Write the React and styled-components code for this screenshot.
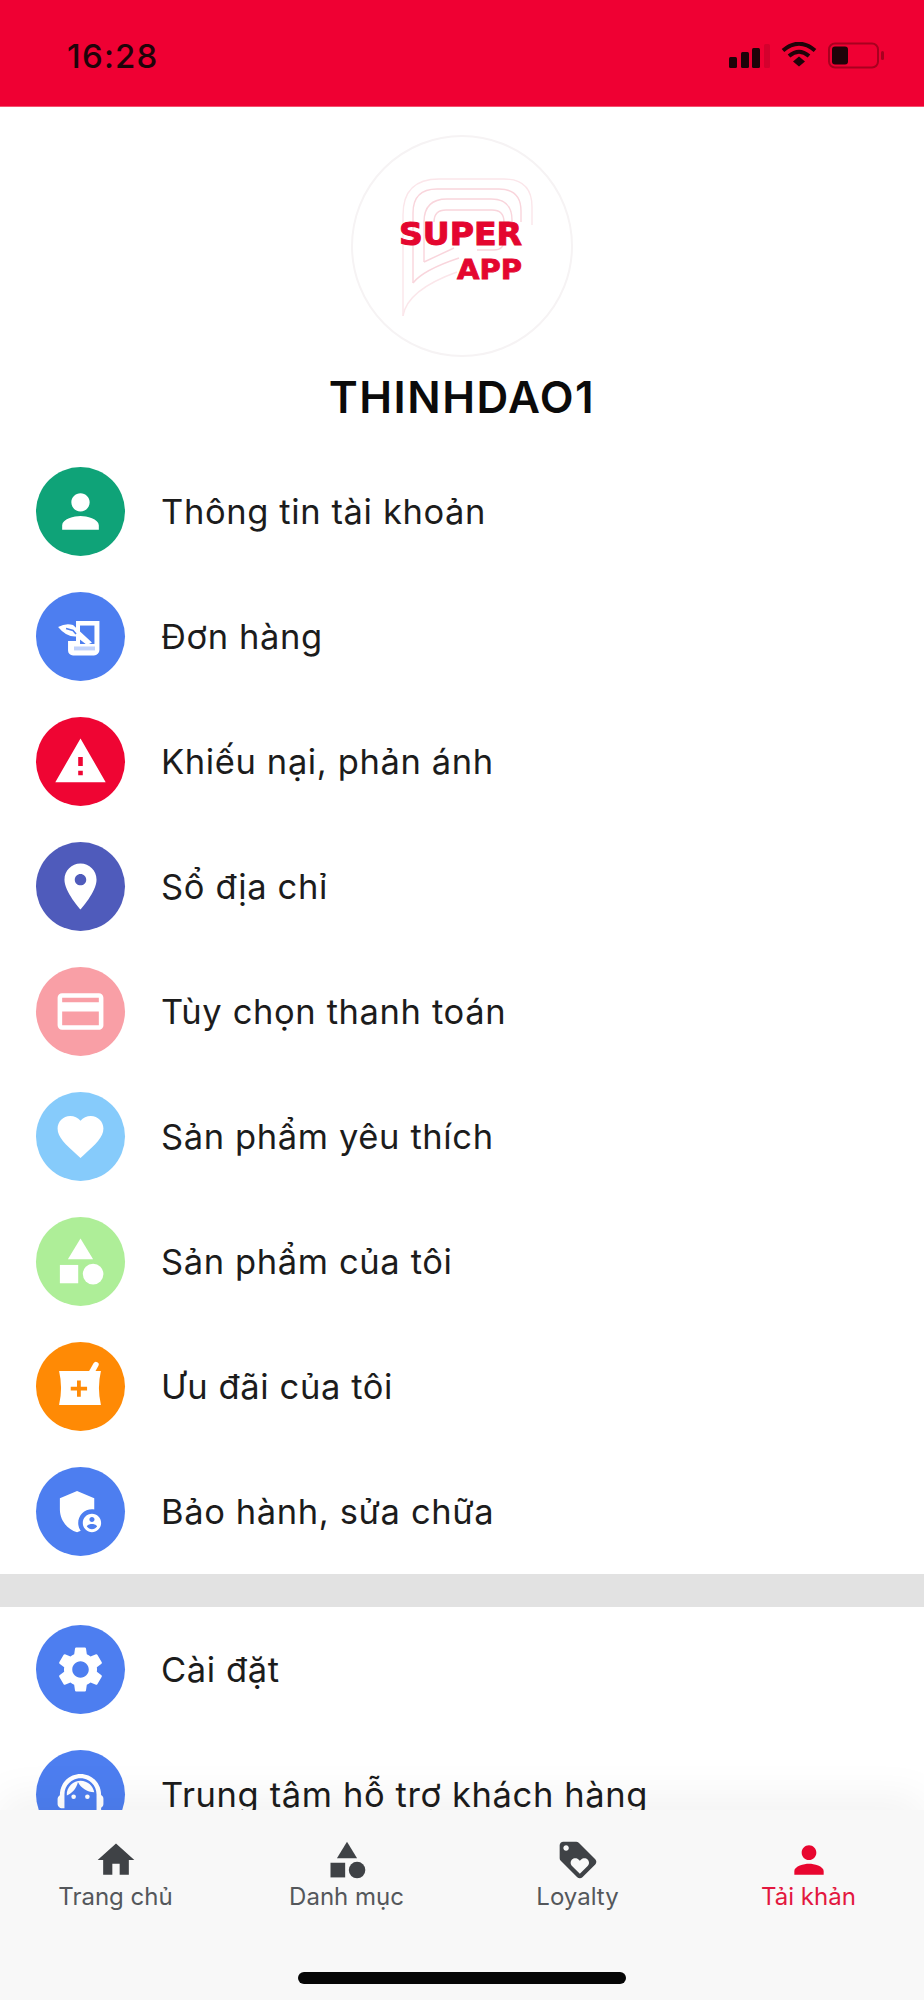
import React from 'react';
import styled, { createGlobalStyle } from 'styled-components';

const GlobalStyle = createGlobalStyle`
  html, body {
    margin: 0;
    padding: 0;
    background: #fff;
  }
  body {
    font-family: "Inter", "Noto Sans", "Liberation Sans", sans-serif;
  }
`;

const Page = styled.div`
  width: 924px;
  height: 2000px;
  display: flex;
  flex-direction: column;
  overflow: hidden;
  background: #fff;
`;

const StatusBar = styled.header`
  flex: 0 0 107px;
  box-sizing: border-box;
  display: flex;
  align-items: center;
  justify-content: space-between;
  padding: 6px 38px 0 67px;
  background: #ef0033;
  border-bottom: 1px solid #f4526f;
`;

const Clock = styled.span`
  font-size: 33px;
  font-weight: 500;
  letter-spacing: 1.2px;
  line-height: 1;
  color: #1f0309;
`;

const StatusIcons = styled.svg`
  display: block;
`;

const Content = styled.main`
  flex: 1;
  min-height: 0;
  overflow: hidden;
`;

const Profile = styled.section`
  display: flex;
  flex-direction: column;
  align-items: center;
  padding-top: 28px;
`;

const Avatar = styled.div`
  width: 222px;
  height: 222px;
  box-sizing: border-box;
  border: 2px solid #f6f3f4;
  border-radius: 50%;
`;

const LogoDrawing = styled.svg`
  display: block;
  margin: -2px;
`;

const UserName = styled.h1`
  margin: 15px 0 0;
  font-size: 44px;
  line-height: 50px;
  font-weight: 600;
  letter-spacing: 1.5px;
  color: #0b0b0b;
`;

const Menu = styled.nav`
  display: flex;
  flex-direction: column;
  gap: 36px;
  padding: ${(p) => (p.$first ? '45px 0 18px 36px' : '18px 0 0 36px')};
`;

const Row = styled.div`
  display: flex;
  align-items: center;
  gap: 36px;
`;

const Badge = styled.span`
  flex: 0 0 89px;
  height: 89px;
  display: flex;
  align-items: center;
  justify-content: center;
  border-radius: 50%;
  background: ${(p) => p.$bg};
  color: ${(p) => p.$bg};
`;

const Glyph = styled.svg`
  width: 55px;
  height: 55px;
  display: block;
  fill: #fff;
`;

const RowLabel = styled.span`
  font-size: 34.5px;
  line-height: 44px;
  letter-spacing: 0.62px;
  color: #1c1c1c;
  white-space: nowrap;
`;

const Divider = styled.div`
  height: 33px;
  background: #e2e2e2;
`;

const TabBar = styled.footer`
  flex: 0 0 190px;
  position: relative;
  display: flex;
  flex-direction: column;
  align-items: center;
  background: #f8f8f8;
  box-shadow: 0 -14px 40px rgba(0, 0, 0, 0.05);
`;

const Tabs = styled.div`
  width: 924px;
  display: grid;
  grid-template-columns: repeat(4, 231px);
  padding-top: 28px;
`;

const Tab = styled.div`
  display: flex;
  flex-direction: column;
  align-items: center;
  color: ${(p) => (p.$active ? '#e3173f' : '#54575b')};
`;

const TabIcon = styled.svg`
  width: 44px;
  height: 44px;
  display: block;
  fill: ${(p) => (p.$active ? '#e8062f' : '#3f4246')};
`;

const TabLabel = styled.span`
  font-size: 24px;
  line-height: 30px;
  white-space: nowrap;
`;

const HomeIndicator = styled.div`
  width: 328px;
  height: 12px;
  margin-top: 60px;
  border-radius: 6px;
  background: #050505;
`;

const LOCAL_BOX = '16.9 16.9 55.2 55.2';
const MATERIAL_BOX = '0 0 24 24';

const paths = {
  person: 'M12 12c2.21 0 4-1.79 4-4s-1.79-4-4-4-4 1.79-4 4 1.79 4 4 4zm0 2c-2.67 0-8 1.34-8 4v2h16v-2c0-2.66-5.33-4-8-4z',
  warning: 'M1 21h22L12 2 1 21zm12-3h-2v-2h2v2zm0-4h-2v-4h2v4z',
  room: 'M12 2C8.13 2 5 5.13 5 9c0 5.25 7 13 7 13s7-7.75 7-13c0-3.87-3.13-7-7-7zm0 9.5c-1.38 0-2.5-1.12-2.5-2.5s1.12-2.5 2.5-2.5 2.5 1.12 2.5 2.5-1.12 2.5-2.5 2.5z',
  card: 'M20 4H4c-1.11 0-1.99.89-1.99 2L2 18c0 1.11.89 2 2 2h16c1.11 0 2-.89 2-2V6c0-1.11-.89-2-2-2zm0 14H4v-6h16v6zm0-10H4V6h16v2z',
  heart: 'M12 21.35l-1.45-1.32C5.4 15.36 2 12.28 2 8.5 2 5.42 4.42 3 7.5 3c1.74 0 3.41.81 4.5 2.09C13.09 3.81 14.76 3 16.5 3 19.58 3 22 5.42 22 8.5c0 3.78-3.4 6.86-8.55 11.54L12 21.35z',
  shield: 'M17 11c.34 0 .67.04 1 .09V6.27L10.5 3 3 6.27v4.91c0 4.54 3.2 8.79 7.5 9.82.55-.13 1.08-.32 1.6-.55-.69-.98-1.1-2.17-1.1-3.45 0-3.31 2.69-6 6-6z',
  shieldUser: 'M17 13c-2.21 0-4 1.79-4 4s1.79 4 4 4 4-1.79 4-4-1.79-4-4-4zm0 1.38c.62 0 1.12.51 1.12 1.12s-.51 1.12-1.12 1.12-1.12-.51-1.12-1.12.5-1.12 1.12-1.12zm0 5.37c-.93 0-1.74-.46-2.24-1.17.05-.72 1.51-1.08 2.24-1.08s2.19.36 2.24 1.08c-.5.71-1.31 1.17-2.24 1.17z',
  gear: 'M19.14 12.94c.04-.3.06-.61.06-.94 0-.32-.02-.64-.07-.94l2.03-1.58c.18-.14.23-.41.12-.61l-1.92-3.32c-.12-.22-.37-.29-.59-.22l-2.39.96c-.5-.38-1.03-.7-1.62-.94l-.36-2.54c-.04-.24-.24-.41-.48-.41h-3.84c-.24 0-.43.17-.47.41l-.36 2.54c-.59.24-1.13.57-1.62.94l-2.39-.96c-.22-.08-.47 0-.59.22L2.74 8.87c-.12.21-.08.47.12.61l2.03 1.58c-.05.3-.09.63-.09.94s.02.64.07.94l-2.03 1.58c-.18.14-.23.41-.12.61l1.92 3.32c.12.22.37.29.59.22l2.39-.96c.5.38 1.03.7 1.62.94l.36 2.54c.05.24.24.41.48.41h3.84c.24 0 .44-.17.47-.41l.36-2.54c.59-.24 1.13-.56 1.62-.94l2.39.96c.22.08.47 0 .59-.22l1.92-3.32c.12-.22.07-.47-.12-.61l-2.01-1.58zM12 15.6c-1.98 0-3.6-1.62-3.6-3.6s1.62-3.6 3.6-3.6 3.6 1.62 3.6 3.6-1.62 3.6-3.6 3.6z',
  home: 'M10 20v-6h4v6h5v-8h3L12 3 2 12h3v8z',
  loyalty: 'M21.41 11.58l-9-9C12.05 2.22 11.55 2 11 2H4c-1.1 0-2 .9-2 2v7c0 .55.22 1.05.59 1.42l9 9c.36.36.86.58 1.41.58.55 0 1.05-.22 1.41-.59l7-7c.37-.36.59-.86.59-1.41 0-.55-.23-1.06-.59-1.42zM5.5 7C4.67 7 4 6.33 4 5.5S4.67 4 5.5 4 7 4.67 7 5.5 6.33 7 5.5 7zm11.77 8.27L13 19.54l-4.27-4.27C8.28 14.81 8 14.19 8 13.5c0-1.38 1.12-2.5 2.5-2.5.69 0 1.32.28 1.77.74l.73.72.73-.73c.45-.45 1.08-.73 1.77-.73 1.38 0 2.5 1.12 2.5 2.5 0 .69-.28 1.32-.73 1.77z',
};

const Shapes = () => (
  <>
    <path d="M12 2l-5.5 9h11z" />
    <circle cx="17.5" cy="17.5" r="4.5" />
    <path d="M3 13.5h8v8H3z" />
  </>
);

const OrderGlyph = () => (
  <Glyph viewBox={LOCAL_BOX}>
    <path d="M40 29H63.5V58a5.5 5.5 0 0 1-5.5 5.5H37a5 5 0 0 1-5-5V49h8z" />
    <path d="M44 33.500H58.500V52H44z" fill="currentColor" />
    <path d="M38 54.500H59V58.500H38z" fill="currentColor" opacity="0.35" />
    <path d="M22 35Q30 30.500 37 33L56 50.500 51 53 40 44.500Q30 45 22 35Z" />
    <path d="M30 36.500L37 38.500 40 42" fill="none" stroke="currentColor" strokeWidth="1.600" />
  </Glyph>
);

const MortarGlyph = () => (
  <Glyph viewBox={LOCAL_BOX}>
    <path d="M60 22.500L54 33" fill="none" stroke="#fff" strokeWidth="5.500" strokeLinecap="round" />
    <path
      fillRule="evenodd"
      d="M23 29H65Q61 46 65 63H23Q27 46 23 29ZM41 38.500V44.800H34.700V48.600H41V54.900H44.800V48.600H51.100V44.800H44.800V38.500Z"
    />
  </Glyph>
);

const HeadsetGlyph = () => (
  <Glyph viewBox={MATERIAL_BOX}>
    <path d="M21 12.22C21 6.73 16.74 3 12 3c-4.69 0-9 3.650-9 9.280-.6.34-1 .98-1 1.720v2c0 1.100.9 2 2 2h1v-6.100c0-3.870 3.130-7 7-7s7 3.130 7 7V19h-8v2h8c1.100 0 2-.9 2-2v-1.220c.59-.31 1-.92 1-1.640v-2.300c0-.7-.41-1.310-1-1.620z" />
    <circle cx="9" cy="13" r="1" />
    <circle cx="15" cy="13" r="1" />
    <path d="M18 11.030C17.520 8.180 15.040 6 12.050 6c-3.030 0-6.290 2.510-6.030 6.450 2.470-1.010 4.330-3.210 4.860-5.890 1.310 2.630 4 4.440 7.120 4.470z" />
  </Glyph>
);

const materialGlyph = (...ds) => () => (
  <Glyph viewBox={MATERIAL_BOX}>
    {ds.map((d) => <path key={d} d={d} />)}
  </Glyph>
);

const ShapesGlyph = () => (
  <Glyph viewBox={MATERIAL_BOX}>
    <Shapes />
  </Glyph>
);

const accountItems = [
  { label: 'Thông tin tài khoản', bg: '#0fa378', Icon: materialGlyph(paths.person) },
  { label: 'Đơn hàng', bg: '#4d7ef0', Icon: OrderGlyph },
  { label: 'Khiếu nại, phản ánh', bg: '#ef0533', Icon: materialGlyph(paths.warning) },
  { label: 'Sổ địa chỉ', bg: '#4f5bbb', Icon: materialGlyph(paths.room) },
  { label: 'Tùy chọn thanh toán', bg: '#f99fa6', Icon: materialGlyph(paths.card) },
  { label: 'Sản phẩm yêu thích', bg: '#86cbfb', Icon: materialGlyph(paths.heart) },
  { label: 'Sản phẩm của tôi', bg: '#aeee98', Icon: ShapesGlyph },
  { label: 'Ưu đãi của tôi', bg: '#ff8a05', Icon: MortarGlyph },
  { label: 'Bảo hành, sửa chữa', bg: '#4d7ef0', Icon: materialGlyph(paths.shield, paths.shieldUser) },
];

const supportItems = [
  { label: 'Cài đặt', bg: '#4d7ef0', Icon: materialGlyph(paths.gear) },
  { label: 'Trung tâm hỗ trợ khách hàng', bg: '#4d7ef0', Icon: HeadsetGlyph },
];

const tabs = [
  { label: 'Trang chủ', icon: <path d={paths.home} /> },
  { label: 'Danh mục', icon: <Shapes /> },
  { label: 'Loyalty', icon: <path d={paths.loyalty} /> },
  { label: 'Tải khản', icon: <path d={paths.person} />, active: true },
];

const StatusGlyphs = () => (
  <StatusIcons width="158" height="28" viewBox="728 42 158 28">
    <rect x="729" y="57" width="8" height="11" rx="1.500" fill="#1f0309" />
    <rect x="741" y="52" width="8" height="16" rx="1.500" fill="#1f0309" />
    <rect x="752" y="48" width="8" height="20" rx="1.500" fill="#1f0309" />
    <rect x="764" y="44" width="6" height="24" rx="1.500" fill="#d4002d" />
    <path d="M783 50.500Q799 37 815 50.500" fill="none" stroke="#1f0309" strokeWidth="4" />
    <path d="M789 56Q799 47.500 809 56" fill="none" stroke="#1f0309" strokeWidth="4" />
    <path d="M793 61.500L799 56.500 805 61.500 799 66.500Z" fill="#1f0309" />
    <rect x="829" y="43.500" width="49" height="24" rx="6" fill="none" stroke="#a8001f" strokeWidth="2" />
    <rect x="832" y="46.500" width="16" height="18" rx="3" fill="#1f0309" />
    <rect x="881" y="51" width="3" height="9" rx="1.500" fill="#a8001f" />
  </StatusIcons>
);

const SuperAppLogo = () => (
  <LogoDrawing width="222" height="222" viewBox="352 135 222 222">
    <g fill="none" stroke="#f9d5dc" strokeWidth="1.400">
      <path d="M404 316V215Q404 179 440 179H505Q533 179 533 207V225" stroke="#fbe6ea" />
      <path d="M414 283V213Q414 189 438 189H500Q522 189 522 211V222" />
      <path d="M414 283Q424 270 460 258" />
      <path d="M425 262V222Q425 199 448 199H492Q513 199 513 220V222" />
      <path d="M425 262L455 248" />
      <path d="M435 222V222Q435 210 447 210H493Q505 210 505 222V240Q505 250 495 250H478" />
      <path d="M404 316Q408 290 458 272" stroke="#fbe6ea" />
    </g>
    <text
      x="400"
      y="245"
      textLength="123"
      lengthAdjust="spacingAndGlyphs"
      fontFamily='"DejaVu Sans", sans-serif'
      fontWeight="700"
      fontSize="32"
      fill="#e4062f"
      stroke="#e4062f"
      strokeWidth="1"
    >
      SUPER
    </text>
    <text
      x="458"
      y="279"
      textLength="65"
      lengthAdjust="spacingAndGlyphs"
      fontFamily='"DejaVu Sans", sans-serif'
      fontWeight="700"
      fontSize="26"
      fill="#e4062f"
      stroke="#e4062f"
      strokeWidth="0.800"
    >
      APP
    </text>
  </LogoDrawing>
);

const MenuRows = ({ items, first }) => (
  <Menu $first={first}>
    {items.map(({ label, bg, Icon }) => (
      <Row key={label}>
        <Badge $bg={bg}><Icon /></Badge>
        <RowLabel>{label}</RowLabel>
      </Row>
    ))}
  </Menu>
);

export default function App() {
  return (
    <Page>
      <GlobalStyle />
      <StatusBar>
        <Clock>16:28</Clock>
        <StatusGlyphs />
      </StatusBar>
      <Content>
        <Profile>
          <Avatar><SuperAppLogo /></Avatar>
          <UserName>THINHDAO1</UserName>
        </Profile>
        <MenuRows items={accountItems} first />
        <Divider />
        <MenuRows items={supportItems} />
      </Content>
      <TabBar>
        <Tabs>
          {tabs.map((tab) => (
            <Tab key={tab.label} $active={tab.active}>
              <TabIcon viewBox={MATERIAL_BOX} $active={tab.active}>{tab.icon}</TabIcon>
              <TabLabel>{tab.label}</TabLabel>
            </Tab>
          ))}
        </Tabs>
        <HomeIndicator />
      </TabBar>
    </Page>
  );
}
